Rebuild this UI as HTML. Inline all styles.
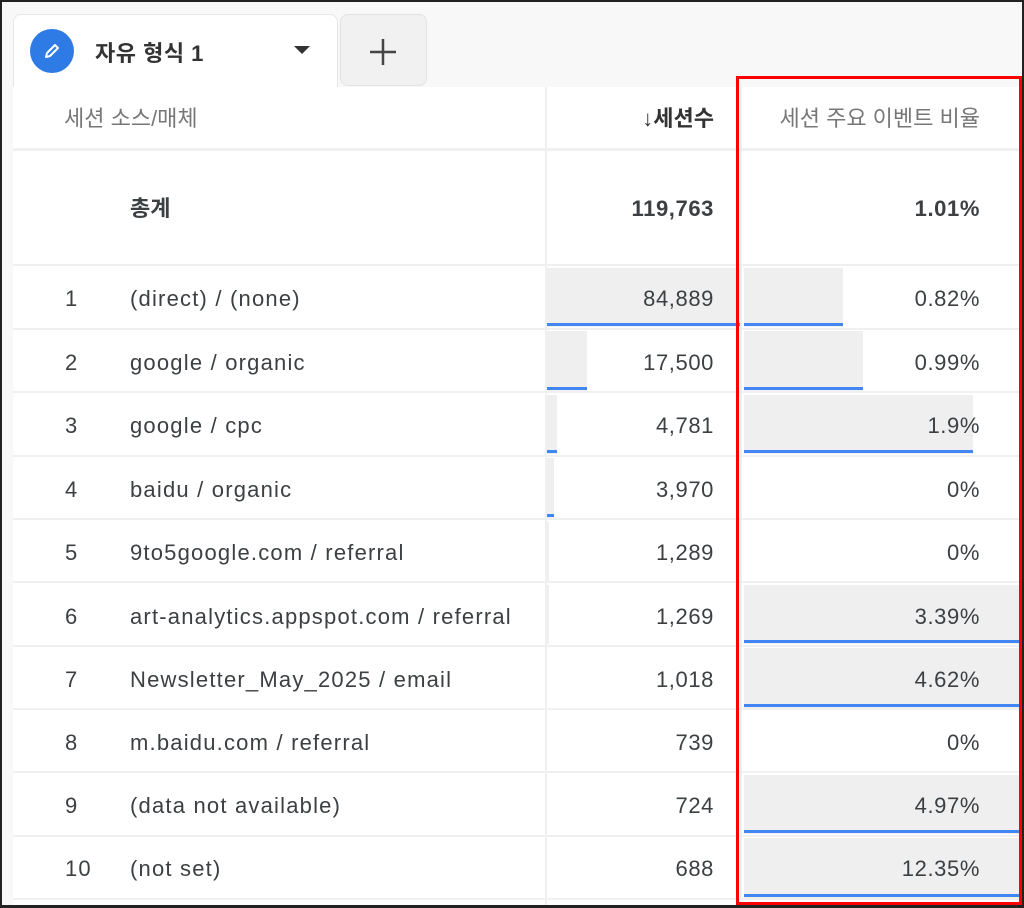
<!DOCTYPE html>
<html><head><meta charset="utf-8"><style>
*{margin:0;padding:0;box-sizing:border-box}
body{width:1024px;height:908px;background:#f8f8f8;font-family:"Liberation Sans","Noto Sans CJK KR",sans-serif;color:#3c4043;position:relative;overflow:hidden}
.a{position:absolute}
.frame{left:0;top:0;width:1024px;height:908px;border:2px solid #222;border-bottom-width:3px;z-index:10}
.tab{left:13px;top:14px;width:325px;height:74px;background:#fff;border-radius:8px 8px 0 0;border:1px solid #e6e6e6;border-bottom:none}
.plus{left:340px;top:14px;width:87px;height:72px;background:#f1f1f1;border-radius:8px;border:1px solid #e2e2e2}
.tbl{left:13px;top:87px;width:1009px;height:820px;background:#fff}
.h{height:2px;background:#f0f0f0;left:13px;width:1009px}
.v{width:2px;background:#f0f0f0;top:87px;height:820px}
.t{font-size:22px;line-height:24px;white-space:nowrap;letter-spacing:1.2px}
.r{text-align:right;letter-spacing:0.6px}
.g{background:#efefef}
.b{background:#4285f4;height:3px}
.red{left:736px;top:76px;width:286px;height:829px;border:3px solid #f00;z-index:11}
</style></head><body>
<div class="a tab"></div>
<div class="a" style="left:30px;top:29px;width:44px;height:44px;border-radius:50%;background:#2f7be6"></div>
<svg class="a" style="left:40px;top:39px" width="24" height="24" viewBox="0 0 24 24"><path d="M6 18 L7 14 L15 6 L18 9 L10 17 Z" fill="none" stroke="#fff" stroke-width="2" stroke-linejoin="round"/></svg>
<div class="a t" style="left:95px;top:42px;font-weight:bold;color:#333;letter-spacing:0.5px">자유 형식 1</div>
<svg class="a" style="left:293px;top:45px" width="18" height="10"><path d="M1 1 L17 1 L9 9 Z" fill="#333"/></svg>
<div class="a plus"></div>
<svg class="a" style="left:368px;top:37px" width="30" height="30"><path d="M15 2 V28 M2 15 H28" stroke="#444" stroke-width="2.5"/></svg>
<div class="a tbl"></div>
<div class="a v" style="left:545px"></div>
<div class="a v" style="left:740px"></div>
<div class="a t" style="left:64px;top:107px;color:#777;letter-spacing:0">세션 소스/매체</div>
<div class="a t r" style="left:550px;width:164px;top:107px;font-weight:bold;color:#333;letter-spacing:0">↓세션수</div>
<div class="a t r" style="left:745px;width:235px;top:107px;color:#777;letter-spacing:0">세션 주요 이벤트 비율</div>
<div class="a h" style="top:148px;height:3px"></div>
<div class="a t" style="left:130px;top:197px;font-weight:bold;letter-spacing:0">총계</div>
<div class="a t r" style="left:550px;width:164px;top:197px;font-weight:bold">119,763</div>
<div class="a t r" style="left:745px;width:235px;top:197px;font-weight:bold">1.01%</div>
<div class="a h" style="top:264px"></div>

<div class="a g" style="left:547px;top:268px;width:193px;height:59px"></div><div class="a b" style="left:547px;top:323px;width:193px"></div>
<div class="a g" style="left:744px;top:268px;width:99px;height:59px"></div><div class="a b" style="left:744px;top:323px;width:99px"></div>
<div class="a g" style="left:547px;top:331px;width:40px;height:60px"></div><div class="a b" style="left:547px;top:387px;width:40px"></div>
<div class="a g" style="left:744px;top:331px;width:119px;height:60px"></div><div class="a b" style="left:744px;top:387px;width:119px"></div>
<div class="a g" style="left:547px;top:395px;width:10px;height:59px"></div><div class="a b" style="left:547px;top:450px;width:10px"></div>
<div class="a g" style="left:744px;top:395px;width:229px;height:59px"></div><div class="a b" style="left:744px;top:450px;width:229px"></div>
<div class="a g" style="left:547px;top:458px;width:7px;height:60px"></div><div class="a b" style="left:547px;top:514px;width:7px"></div>
<div class="a g" style="left:547px;top:522px;width:2px;height:59px"></div>
<div class="a g" style="left:547px;top:585px;width:2px;height:59px"></div>
<div class="a g" style="left:744px;top:585px;width:278px;height:59px"></div><div class="a b" style="left:744px;top:640px;width:278px"></div>
<div class="a g" style="left:744px;top:648px;width:278px;height:60px"></div><div class="a b" style="left:744px;top:704px;width:278px"></div>
<div class="a g" style="left:744px;top:775px;width:278px;height:59px"></div><div class="a b" style="left:744px;top:830px;width:278px"></div>
<div class="a g" style="left:744px;top:838px;width:278px;height:60px"></div><div class="a b" style="left:744px;top:894px;width:278px"></div>

<div class="a h" style="top:328px"></div><div class="a h" style="top:391px"></div><div class="a h" style="top:455px"></div><div class="a h" style="top:518px"></div><div class="a h" style="top:581px"></div><div class="a h" style="top:645px"></div><div class="a h" style="top:708px"></div><div class="a h" style="top:771px"></div><div class="a h" style="top:835px"></div><div class="a h" style="top:898px"></div>

<div class="a t" style="left:65px;top:287px">1</div><div class="a t" style="left:130px;top:287px">(direct) / (none)</div><div class="a t r" style="left:550px;width:164px;top:287px">84,889</div><div class="a t r" style="left:745px;width:235px;top:287px">0.82%</div>
<div class="a t" style="left:65px;top:351px">2</div><div class="a t" style="left:130px;top:351px">google / organic</div><div class="a t r" style="left:550px;width:164px;top:351px">17,500</div><div class="a t r" style="left:745px;width:235px;top:351px">0.99%</div>
<div class="a t" style="left:65px;top:414px">3</div><div class="a t" style="left:130px;top:414px">google / cpc</div><div class="a t r" style="left:550px;width:164px;top:414px">4,781</div><div class="a t r" style="left:745px;width:235px;top:414px">1.9%</div>
<div class="a t" style="left:65px;top:478px">4</div><div class="a t" style="left:130px;top:478px">baidu / organic</div><div class="a t r" style="left:550px;width:164px;top:478px">3,970</div><div class="a t r" style="left:745px;width:235px;top:478px">0%</div>
<div class="a t" style="left:65px;top:541px">5</div><div class="a t" style="left:130px;top:541px">9to5google.com / referral</div><div class="a t r" style="left:550px;width:164px;top:541px">1,289</div><div class="a t r" style="left:745px;width:235px;top:541px">0%</div>
<div class="a t" style="left:65px;top:605px">6</div><div class="a t" style="left:130px;top:605px">art-analytics.appspot.com / referral</div><div class="a t r" style="left:550px;width:164px;top:605px">1,269</div><div class="a t r" style="left:745px;width:235px;top:605px">3.39%</div>
<div class="a t" style="left:65px;top:668px">7</div><div class="a t" style="left:130px;top:668px">Newsletter_May_2025 / email</div><div class="a t r" style="left:550px;width:164px;top:668px">1,018</div><div class="a t r" style="left:745px;width:235px;top:668px">4.62%</div>
<div class="a t" style="left:65px;top:731px">8</div><div class="a t" style="left:130px;top:731px">m.baidu.com / referral</div><div class="a t r" style="left:550px;width:164px;top:731px">739</div><div class="a t r" style="left:745px;width:235px;top:731px">0%</div>
<div class="a t" style="left:65px;top:794px">9</div><div class="a t" style="left:130px;top:794px">(data not available)</div><div class="a t r" style="left:550px;width:164px;top:794px">724</div><div class="a t r" style="left:745px;width:235px;top:794px">4.97%</div>
<div class="a t" style="left:65px;top:857px">10</div><div class="a t" style="left:130px;top:857px">(not set)</div><div class="a t r" style="left:550px;width:164px;top:857px">688</div><div class="a t r" style="left:745px;width:235px;top:857px">12.35%</div>

<div class="a red"></div>
<div class="a frame"></div>
</body></html>
